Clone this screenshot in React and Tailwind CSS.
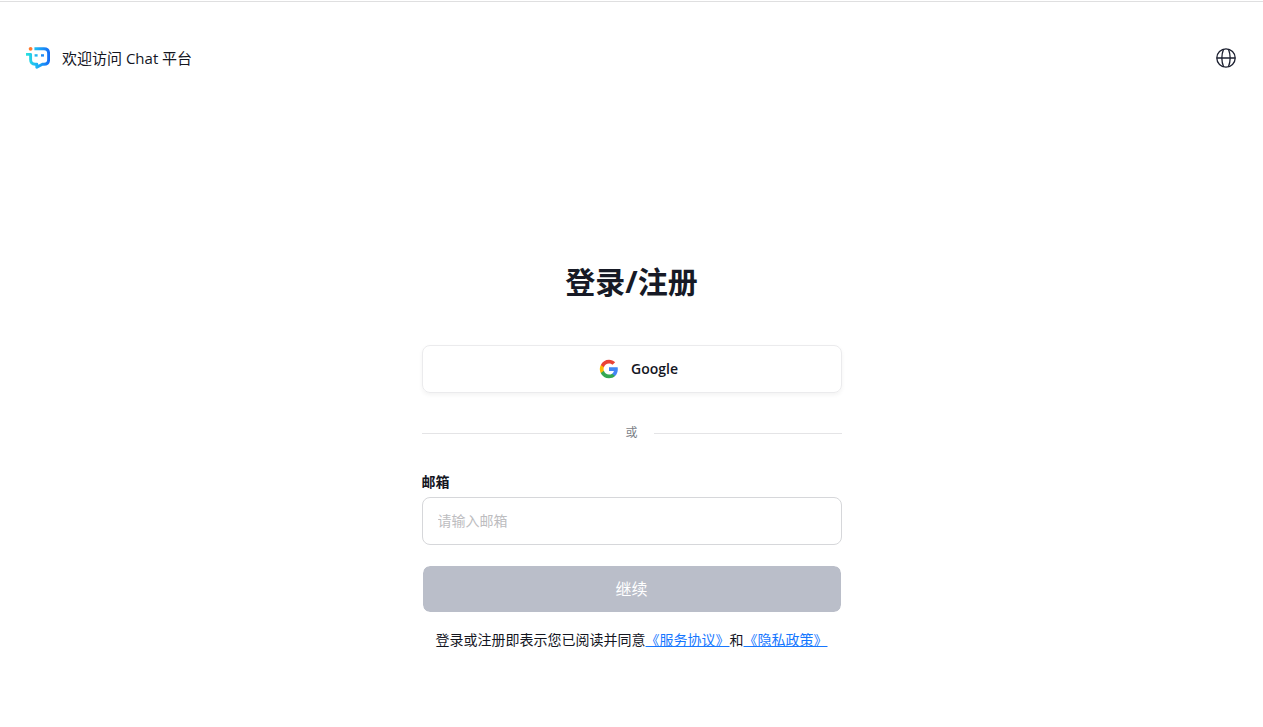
import React, { useState } from 'react';

// --- ICONS ---
function ChatLogo() {
  return (
    <svg width="24" height="24" viewBox="0 0 24 24" fill="none" aria-hidden="true">
      <defs>
        <linearGradient id="logo-stroke" x1="0" y1="12" x2="24" y2="12" gradientUnits="userSpaceOnUse">
          <stop offset="0" stopColor="#2be3dd" />
          <stop offset="0.45" stopColor="#1cb4f6" />
          <stop offset="1" stopColor="#1769f5" />
        </linearGradient>
      </defs>
      <path
        d="M8.4 2.8H18c2.9 0 4.6 1.7 4.6 4.6v6.2c0 2.9-1.7 4.7-4.6 4.7h-1.6l-5.6 3v-3H9.2c-2.9 0-4.6-1.8-4.6-4.7V8.4H0"
        stroke="url(#logo-stroke)"
        strokeWidth="2.9"
        strokeLinejoin="round"
      />
      <circle cx="4.6" cy="2.8" r="1.9" fill="#ff7a2e" />
      <path d="M8.6 9.4h3" stroke="#21b5f2" strokeWidth="2.4" />
      <path d="M15 9.4h3" stroke="#1f8df6" strokeWidth="2.4" />
    </svg>
  );
}

function GlobeIcon() {
  return (
    <svg width="20" height="20" viewBox="0 0 20 20" fill="none" stroke="#1c2030" strokeWidth="1.3" aria-hidden="true">
      <circle cx="10" cy="10" r="9.2" />
      <path d="M0.8 10h18.4M7.6 1C5.4 6.6 5.4 13.4 7.6 19M12.4 1c2.2 5.6 2.2 12.4 0 18" />
    </svg>
  );
}

function GoogleIcon() {
  return (
    <svg width="20" height="20" viewBox="0 0 24 24" aria-hidden="true">
      <path fill="#4285F4" d="M22.56 12.25c0-.78-.07-1.53-.2-2.25H12v4.26h5.92a5.06 5.06 0 0 1-2.2 3.32v2.77h3.57c2.08-1.92 3.27-4.74 3.27-8.1z" />
      <path fill="#34A853" d="M12 23c2.97 0 5.46-.98 7.28-2.65l-3.57-2.77c-.98.66-2.23 1.06-3.71 1.06-2.86 0-5.29-1.93-6.16-4.53H2.18v2.84A11 11 0 0 0 12 23z" />
      <path fill="#FBBC05" d="M5.84 14.1a6.6 6.6 0 0 1 0-4.2V7.06H2.18a11 11 0 0 0 0 9.88l3.66-2.84z" />
      <path fill="#EA4335" d="M12 5.38c1.62 0 3.06.56 4.21 1.64l3.15-3.15C17.45 2.09 14.97 1 12 1 7.7 1 3.99 3.47 2.18 7.06l3.66 2.84C6.71 7.31 9.14 5.38 12 5.38z" />
    </svg>
  );
}

export default function App() {
  const [email, setEmail] = useState('');

  return (
    <div className="min-h-screen bg-white pt-px font-['Open_Sans','Noto_Sans_CJK_SC',sans-serif] text-[#14161f]">
      {/* Header */}
      <header className="flex items-center justify-between border-t border-[#dfdfe0] pt-11 pr-[27px] pl-[26px]">
        <div className="flex items-center gap-3">
          <ChatLogo />
          <span className="text-[15px] leading-6">欢迎访问 Chat 平台</span>
        </div>
        <button type="button" aria-label="语言">
          <GlobeIcon />
        </button>
      </header>

      {/* Login form */}
      <main className="px-4 pt-48 pb-12">
        <form className="mx-auto w-full max-w-[420px]" onSubmit={(e) => e.preventDefault()}>
          <h1 className="text-center text-[30px] leading-10 font-bold text-[#171a26]">登录/注册</h1>

          <button type="button" className="mt-[43px] flex h-12 w-full items-center justify-center gap-3 rounded-lg border border-[#ebebed] pl-[14px] text-sm font-semibold shadow-[0_2px_4px_rgba(0,0,0,0.05)]">
            <GoogleIcon />
            Google
          </button>

          <div className="mt-7 flex items-center gap-4 text-xs leading-6 text-[#7c7f88]">
            <span className="h-px flex-1 bg-[#e4e4e6]" />
            或
            <span className="h-px flex-1 bg-[#e4e4e6]" />
          </div>

          <label htmlFor="email" className="mt-[27px] block text-sm leading-5 font-bold">邮箱</label>
          <input
            id="email"
            type="email"
            placeholder="请输入邮箱"
            className="mt-[5px] h-12 w-full rounded-lg border border-[#d6d7da] px-[15px] pb-px text-sm outline-none placeholder:text-[#bdbdbf] focus:border-[#1677ff]"
            value={email}
            onChange={(e) => setEmail(e.target.value)}
          />

          <button type="submit" className="mt-5 h-12 w-full rounded-lg border border-white bg-[#babec9] bg-clip-padding text-base text-white">
            继续
          </button>

          <p className="mt-[15px] text-center text-sm leading-6">
            登录或注册即表示您已阅读并同意<a href="#terms" className="text-[#1677ff] underline">《服务协议》</a>和<a href="#privacy" className="text-[#1677ff] underline">《隐私政策》</a>
          </p>
        </form>
      </main>
    </div>
  );
}
